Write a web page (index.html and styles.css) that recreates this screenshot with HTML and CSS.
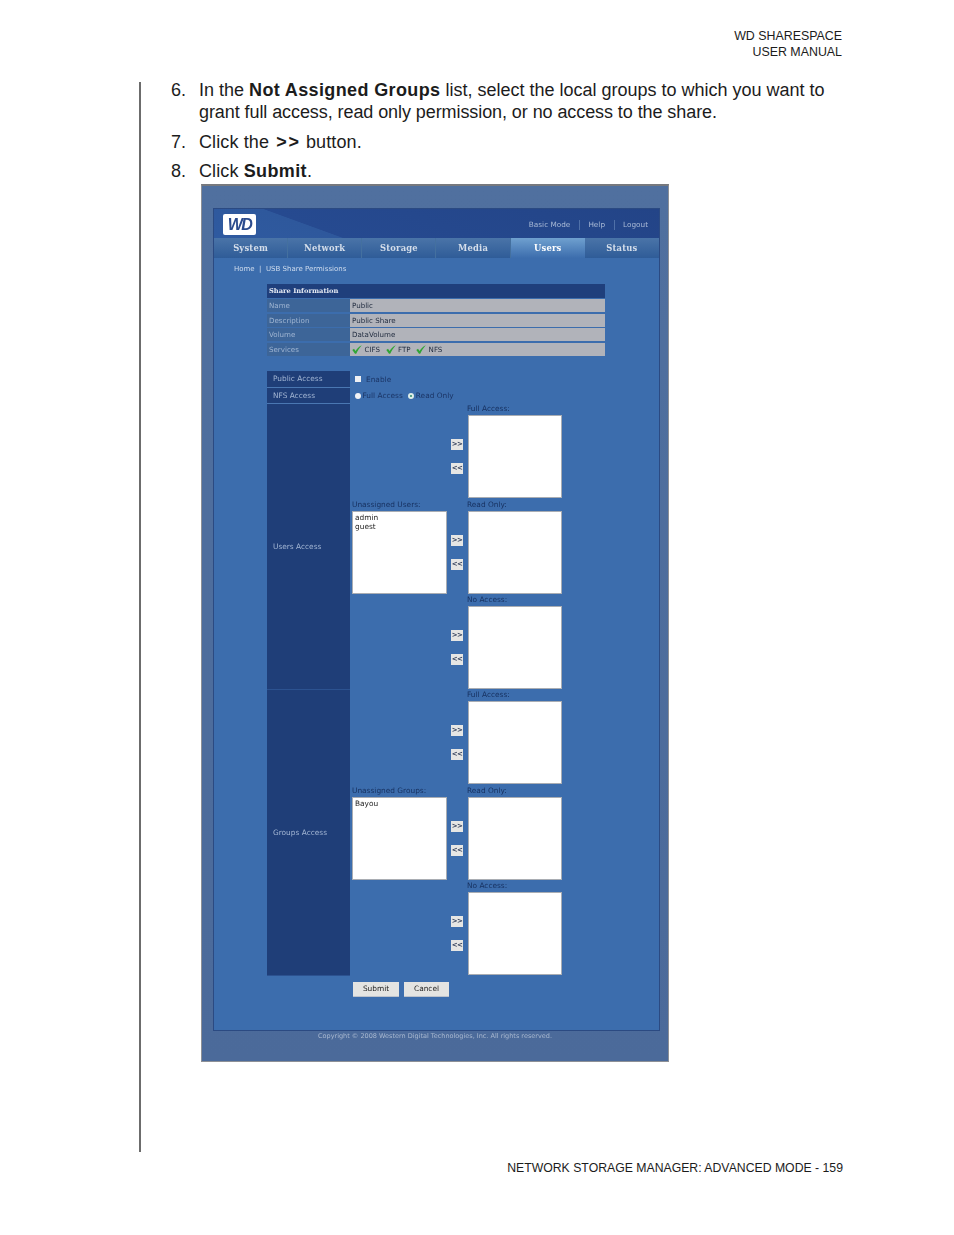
FILE: index.html
```html
<!DOCTYPE html>
<html lang="en">
<head>
<meta charset="utf-8">
<title>WD ShareSpace User Manual</title>
<link rel="stylesheet" href="styles.css">
</head>
<body>
<header class="doc-header">WD SHARESPACE<br>USER MANUAL</header>
<main class="doc-main">
  <div class="steps">
    <div class="step"><span class="num">6.</span><div class="step-text">In the <b>Not Assigned Groups</b> list, select the local groups to which you want to<br><span class="tight">grant full access, read only permission, or no access to the share.</span></div></div>
    <div class="step"><span class="num">7.</span><div class="step-text">Click the <b class="wide">&gt;&gt;</b> button.</div></div>
    <div class="step"><span class="num">8.</span><div class="step-text">Click <b>Submit</b>.</div></div>
  </div>
  <div class="shot">
    <div class="frame">
      <div class="top">
        <div class="logo">WD</div>
        <nav class="toplinks"><span>Basic Mode</span><i></i><span>Help</span><i></i><span>Logout</span></nav>
      </div>
      <div class="tabs">
        <div class="tab">System</div><div class="tab">Network</div><div class="tab">Storage</div><div class="tab">Media</div><div class="tab active">Users</div><div class="tab">Status</div>
      </div>
      <div class="crumb">Home &nbsp;|&nbsp; USB Share Permissions</div>
      <div class="content">
        <section class="info">
          <h2 class="info-head">Share Information</h2>
          <div class="info-row"><div class="k">Name</div><div class="v">Public</div></div>
          <div class="info-row"><div class="k">Description</div><div class="v">Public Share</div></div>
          <div class="info-row"><div class="k">Volume</div><div class="v">DataVolume</div></div>
          <div class="info-row"><div class="k">Services</div><div class="v services">
            <svg class="check" viewBox="0 0 10 9"><path d="M.3 5 2 3.800l1.600 2.200C5 3.600 7 1.600 9.800.3 7.600 2.800 5.600 5.500 4.200 8.800H3z"/></svg><span>CIFS</span>
            <svg class="check" viewBox="0 0 10 9"><path d="M.3 5 2 3.800l1.600 2.200C5 3.600 7 1.600 9.800.3 7.600 2.800 5.600 5.500 4.200 8.800H3z"/></svg><span>FTP</span>
            <svg class="check" viewBox="0 0 10 9"><path d="M.3 5 2 3.800l1.600 2.200C5 3.600 7 1.600 9.800.3 7.600 2.800 5.600 5.500 4.200 8.800H3z"/></svg><span>NFS</span>
          </div></div>
        </section>
        <section class="access">
          <div class="a-row small"><div class="side">Public Access</div><div class="opt"><span class="box"></span><span class="enable">Enable</span></div></div>
          <div class="a-row small"><div class="side">NFS Access</div><div class="opt"><span class="radio"></span><span>Full Access</span><span class="radio on"></span><span>Read Only</span></div></div>
          <div class="a-row">
            <div class="side tall">Users Access</div>
            <div class="assign">
              <div class="cell"></div><div class="move"><button>&gt;&gt;</button><button>&lt;&lt;</button></div><div class="cell"><label>Full Access:</label><div class="list"></div></div>
              <div class="cell"><label>Unassigned Users:</label><div class="list">admin<br>guest</div></div><div class="move"><button>&gt;&gt;</button><button>&lt;&lt;</button></div><div class="cell"><label>Read Only:</label><div class="list"></div></div>
              <div class="cell"></div><div class="move"><button>&gt;&gt;</button><button>&lt;&lt;</button></div><div class="cell"><label>No Access:</label><div class="list"></div></div>
            </div>
          </div>
          <div class="a-row">
            <div class="side tall">Groups Access</div>
            <div class="assign">
              <div class="cell"></div><div class="move"><button>&gt;&gt;</button><button>&lt;&lt;</button></div><div class="cell"><label>Full Access:</label><div class="list"></div></div>
              <div class="cell"><label>Unassigned Groups:</label><div class="list">Bayou</div></div><div class="move"><button>&gt;&gt;</button><button>&lt;&lt;</button></div><div class="cell"><label>Read Only:</label><div class="list"></div></div>
              <div class="cell"></div><div class="move"><button>&gt;&gt;</button><button>&lt;&lt;</button></div><div class="cell"><label>No Access:</label><div class="list"></div></div>
            </div>
          </div>
        </section>
        <div class="actions"><button class="act-a">Submit</button><button class="act-b">Cancel</button></div>
      </div>
    </div>
    <div class="copy">Copyright © 2008 Western Digital Technologies, Inc. All rights reserved.</div>
  </div>
</main>
<footer class="doc-footer">NETWORK STORAGE MANAGER: ADVANCED MODE - 159</footer>
</body>
</html>
```
FILE: styles.css
```css
* { box-sizing: border-box; }
html, body { margin: 0; background: #fff; }
body { width: 954px; height: 1235px; overflow: hidden; font-family: "Liberation Sans", Arial, sans-serif; color: #1c1c1c; }

.doc-header { padding: 28px 112px 0 0; height: 82px; text-align: right; font-size: 12.400px; line-height: 16px; }
.doc-main { display: flow-root; margin-left: 139px; height: 1070px; border-left: 2px solid #6c6c6c; padding-left: 30px; }
.doc-footer { margin-top: 8px; padding-right: 111px; text-align: right; font-size: 12.250px; line-height: 16px; }

.steps { margin-top: -3px; font-size: 18px; line-height: 22px; width: 670px; }
.step { display: flex; margin-bottom: 7.500px; }
.step:last-child { margin-bottom: 0; }
.step + .step .step-text { letter-spacing: .12px; }
.num { width: 28px; flex: none; }
.step b { letter-spacing: .37px; }
.tight { letter-spacing: -.08px; }
.step b.wide { letter-spacing: 1.800px; margin: 0 0 0 2px; }

.shot { margin: 2px 0 0 30px; width: 468px; height: 878px; padding: 22px 9px 0 11px; background: linear-gradient(#50709f, #4b6a9a); border: 1px solid #8d9096; border-top: 2px solid #77797e; filter: blur(.6px); font-family: "DejaVu Sans", Verdana, sans-serif; font-size: 7.400px; }
.frame { width: 447px; height: 823px; background: #3c6dad; border: 1px solid #2b4a82; }
.top { height: 29px; display: flex; justify-content: space-between; align-items: center; padding: 2px 11px 0 9px; background: linear-gradient(20deg, #2f5aa0 0, #2e589c 24.400%, #264a90 24.800%, #234487 100%); }
.logo { width: 33px; height: 21px; border-radius: 2px; background: #fff; color: #2a4a8d; font: italic 700 16px/21px "Liberation Sans", sans-serif; text-align: center; letter-spacing: -1.500px; }
.toplinks { display: flex; align-items: center; gap: 8.500px; color: #a9bad6; font-size: 7.300px; }
.toplinks i { width: 1px; height: 10px; background: #4f70a8; }
.tabs { display: grid; grid-template-columns: repeat(6, 1fr); height: 20px; background: linear-gradient(#4a74a8, #2f5c98); }
.tab { font: 700 8.400px/20px "DejaVu Serif", Georgia, serif; color: #d5deea; text-align: center; letter-spacing: .2px; border-right: 1px solid #44709f; }
.tab:last-child { border-right: 0; }
.tab.active { color: #fff; background: linear-gradient(#6fa0cf, #3c6dad); border-right: 0; }
.crumb { padding: 6px 0 0 20px; height: 26px; font-size: 7px; line-height: 10px; color: #cfdcee; }
.content { padding-left: 53px; }

.info { width: 338px; }
.info-head { margin: 0 0 1px; height: 14px; padding-left: 2px; background: #1f3f7c; color: #e5eaf3; font: 700 6.700px/15px "DejaVu Serif", Georgia, serif; }
.info-row { display: flex; height: 13px; margin-bottom: 1.700px; line-height: 13px; font-size: 7.100px; }
.k { width: 83px; padding-left: 2px; background: #3d6598; color: #9fb5d2; }
.v { flex: 1; padding-left: 2px; background: #b1b3ba; color: #1f2a3e; }
.services { display: flex; align-items: center; gap: 2.500px; }
.services span { margin-right: 3px; }
.check { width: 10px; height: 9px; fill: #2fa536; }

.access { margin-top: 15px; width: 339px; }
.a-row { display: flex; }
.a-row.small { height: 16.500px; }
.a-row.small .side { border-bottom: 1px solid #4a77b2; line-height: 16px; height: 16.500px; }
.side { width: 83px; flex: none; padding-left: 6px; background: #1f3e78; color: #a3b6d4; }
.side.tall { display: flex; align-items: center; border-bottom: 1px solid #2c5290; }
.opt { display: flex; align-items: center; gap: 2px; padding-left: 4.500px; color: #1b3566; }
.box { width: 6px; height: 6px; background: #eef0f4; }
.enable { margin-left: 3.500px; }
.radio { width: 6px; height: 6px; border-radius: 50%; background: #f1f3f6; }
.radio.on { margin-left: 3px; background: #2d8a6a; border: 2px solid #dfeee8; }
.assign { display: grid; grid-template-columns: 97px 19px 94px; grid-template-rows: 95.600px 95.600px 94.800px; padding-left: 2px; width: 212px; }
.cell label { display: block; height: 11px; margin-left: -1px; line-height: 10px; color: #16305f; white-space: nowrap; }
.assign > .cell:nth-child(3n+1) label { margin-left: 0; }
.list { width: 100%; height: 83px; background: #fff; border: 1px solid #a9adb3; padding: 1px 2px; color: #222; font-size: 7.400px; line-height: 9px; }
.assign > .cell:nth-child(3n+1) { width: 95px; }
.move { display: flex; flex-direction: column; align-items: flex-start; gap: 13px; padding: 35px 0 0 2px; }
button { padding: 0; border: 0; font-family: inherit; color: #222; background: #e6e6e4; }
.move button { width: 12px; height: 11px; font-size: 7px; line-height: 11px; letter-spacing: -.5px; font-weight: 700; color: #33405c; }

.actions { display: flex; gap: 5px; margin: 5.500px 0 0 86px; }
.actions button { height: 14px; font-size: 7.400px; line-height: 14px; background: #e4e4e2; box-shadow: 0 1px 0 #bcc2cc; }
.act-a { width: 46px; }
.act-b { width: 45px; }
.copy { margin-left: -11px; text-align: center; width: 466px; font-size: 6.500px; line-height: 10px; color: #a8b8d0; }
```
